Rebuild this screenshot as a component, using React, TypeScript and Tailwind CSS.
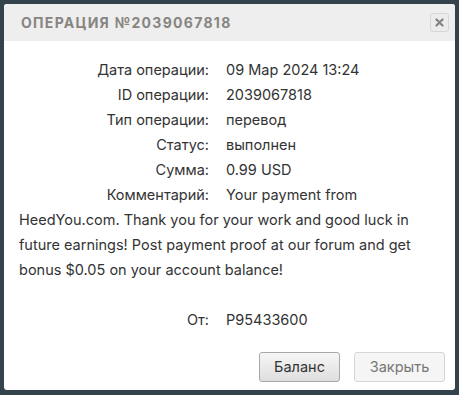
import React from "react";

const rows: [string, string][] = [
  ["Дата операции:", "09 Мар 2024 13:24"],
  ["ID операции:", "2039067818"],
  ["Тип операции:", "перевод"],
  ["Статус:", "выполнен"],
  ["Сумма:", "0.99 USD"],
];

export default function App() {
  return (
    <div className="w-[459px] h-[395px] bg-[#34424c] p-[4px] pb-[5px]" style={{ fontFamily: "Inter, 'Noto Sans', sans-serif" }}>
      <div className="w-[451px] h-[386px] bg-white rounded-[3px] flex flex-col overflow-hidden">
        <div className="h-[37px] bg-[#eeeeee] flex items-center justify-between pl-[17px] pr-[6px] shrink-0">
          <div className="text-[14px] font-bold tracking-[1.3px] text-[#878581]">ОПЕРАЦИЯ №2039067818</div>
          <button className="w-[19px] h-[19px] rounded-[3px] border border-[#d6d6d6] bg-[#ececec] flex items-center justify-center">
            <svg width="9" height="9" viewBox="0 0 9 9">
              <path d="M1.5 1.5 L7.5 7.5 M7.5 1.5 L1.5 7.5" stroke="#858585" strokeWidth="2.3" strokeLinecap="round" />
            </svg>
          </button>
        </div>
        <div className="px-[15px] pt-[16px] text-[14.5px] leading-[25px] text-[#333]">
          {rows.map(([l, v]) => (
            <div key={l}>
              <span className="inline-block w-[190px] text-right mr-[17px]">{l}</span>
              <span>{v}</span>
            </div>
          ))}
          <p>
            <span className="inline-block w-[190px] text-right mr-[17px]">Комментарий:</span>
            <span>Your payment from HeedYou.com. Thank you for your work and good luck in future earnings! Post payment proof at our forum and get bonus $0.05 on your account balance!</span>
          </p>
          <div className="h-[25px]" />
          <div>
            <span className="inline-block w-[190px] text-right mr-[17px]">От:</span>
            <span>P95433600</span>
          </div>
        </div>
        <div className="mt-auto flex justify-end gap-[14px] pr-[10px] pb-[8px]">
          <button className="w-[81px] h-[30px] rounded-[3px] border border-[#a8a8a8] bg-gradient-to-b from-[#f6f6f6] to-[#dedede] text-[14.5px] text-[#333]">Баланс</button>
          <button className="w-[91px] h-[30px] rounded-[3px] border border-[#d6d6d6] bg-[#f5f5f5] text-[14.5px] text-[#777]">Закрыть</button>
        </div>
      </div>
    </div>
  );
}
